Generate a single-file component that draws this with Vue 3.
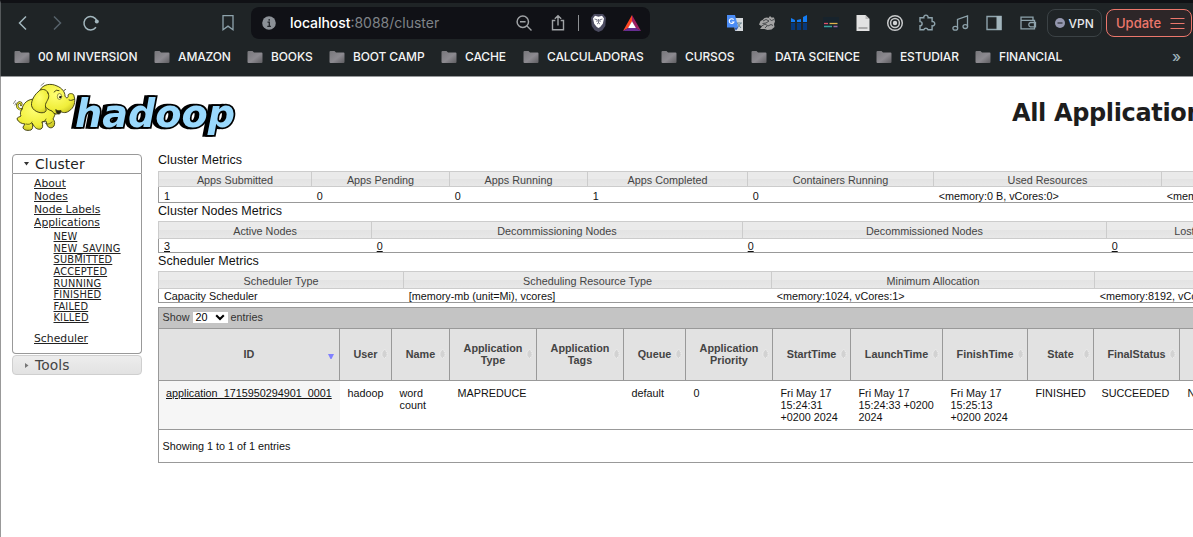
<script setup>
const bookmarks = [
  { name: '00 MI INVERSION', w: 140 },
  { name: 'AMAZON', w: 93 },
  { name: 'BOOKS', w: 82 },
  { name: 'BOOT CAMP', w: 112 },
  { name: 'CACHE', w: 82 },
  { name: 'CALCULADORAS', w: 138 },
  { name: 'CURSOS', w: 90 },
  { name: 'DATA SCIENCE', w: 125 },
  { name: 'ESTUDIAR', w: 99 },
  { name: 'FINANCIAL', w: 100 },
]
const links = ['About', 'Nodes', 'Node Labels', 'Applications']
const states = ['NEW', 'NEW_SAVING', 'SUBMITTED', 'ACCEPTED', 'RUNNING', 'FINISHED', 'FAILED', 'KILLED']
const metrics = [
  {
    title: 'Cluster Metrics',
    cls: 'm-cluster',
    heads: ['Apps Submitted', 'Apps Pending', 'Apps Running', 'Apps Completed', 'Containers Running', 'Used Resources', ''],
    values: ['1', '0', '0', '1', '0', '<memory:0 B, vCores:0>', '<memory:18 GB'],
  },
  {
    title: 'Cluster Nodes Metrics',
    cls: 'm-nodes',
    linked: true,
    heads: ['Active Nodes', 'Decommissioning Nodes', 'Decommissioned Nodes', 'Lost Nodes'],
    values: ['3', '0', '0', '0'],
  },
  {
    title: 'Scheduler Metrics',
    cls: 'm-sched',
    heads: ['Scheduler Type', 'Scheduling Resource Type', 'Minimum Allocation', ''],
    values: ['Capacity Scheduler', '[memory-mb (unit=Mi), vcores]', '<memory:1024, vCores:1>', '<memory:8192, vCores:4>'],
  },
]
const columns = [
  { head: ['ID'], cell: ['application_1715950294901_0001'] },
  { head: ['User'], cell: ['hadoop'] },
  { head: ['Name'], cell: ['word', 'count'] },
  { head: ['Application', 'Type'], cell: ['MAPREDUCE'] },
  { head: ['Application', 'Tags'], cell: [] },
  { head: ['Queue'], cell: ['default'] },
  { head: ['Application', 'Priority'], cell: ['0'] },
  { head: ['StartTime'], cell: ['Fri May 17', '15:24:31', '+0200 2024'] },
  { head: ['LaunchTime'], cell: ['Fri May 17', '15:24:33 +0200', '2024'] },
  { head: ['FinishTime'], cell: ['Fri May 17', '15:25:13', '+0200 2024'] },
  { head: ['State'], cell: ['FINISHED'] },
  { head: ['FinalStatus'], cell: ['SUCCEEDED'] },
  { head: [], cell: ['N/A'] },
]
</script>

<template>
  <div class="window">
    <header class="chrome">
      <div class="toolbar">
        <svg class="i" width="20" height="20" viewBox="0 0 20 20"><path d="M13 3.500 6.500 10l6.500 6.500" stroke="#a3b7be" /></svg>
        <svg class="i" width="20" height="20" viewBox="0 0 20 20"><path d="m7 3.500 6.500 6.500L7 16.500" stroke="#56616a" /></svg>
        <svg class="i" width="20" height="20" viewBox="0 0 20 20"><path d="M15 14.300A6.700 6.700 0 1 1 16 8" stroke="#a3b7be" /><circle cx="15.800" cy="8.600" r="2" fill="#a3b7be" /></svg>
        <svg class="i c5" width="20" height="20" viewBox="0 0 20 20"><path d="M5 2.700h10v14l-5-3.600-5 3.600z" stroke="#8ea3ac" stroke-width="1.300" /></svg>
        <div class="address">
          <svg class="info" width="14" height="14" viewBox="0 0 14 14"><circle cx="7" cy="7" r="6.800" fill="#8c9197" /><path d="M5.500 6.200H7.300V10.300M5.300 10.300h3.600M7.200 3v1.700" stroke="#22252a" stroke-width="1.300" fill="none" /></svg>
          <span class="url"><b>localhost</b>:8088/cluster</span>
          <svg class="i zoom" width="18" height="18" viewBox="0 0 18 18"><circle cx="7.800" cy="7.800" r="5.700" stroke="#a0a3a6" /><path d="m12 12 4.500 4.500M5 7.800h5.600" stroke="#a0a3a6" stroke-width="1.400" /></svg>
          <svg class="i share" width="18" height="18" viewBox="0 0 18 18"><path d="M6.300 6.500H3.500v9.300h11V6.500h-2.800M9 11.500V1.800M5.800 4.800 9 1.700l3.200 3.100" stroke="#a0a3a6" stroke-width="1.400" /></svg>
          <span class="sep"></span>
          <svg class="shield" width="17" height="20" viewBox="0 0 17 20"><path d="M4 1h9l3 3.500-.7 8.500-3 4.200L8.500 19l-3.800-1.800-3-4.200L1 4.500z" fill="#4b4b60" /><path d="m5 2.800 3.500 1 3.500-1 2 2.800-1.200 5.200-2.600 3.300-1.700 1-1.700-1-2.600-3.300L3 5.600z" fill="#fff" /><path d="m4.500 6 2.800.8L6.800 9m5.700-3-2.800.8.500 2.200M7 11l1.500-1 1.500 1M8.500 6v4" stroke="#5b5b6d" stroke-width=".8" fill="none" /></svg>
          <svg class="bat" width="18" height="17" viewBox="0 0 18 17"><path d="M9 0 0 16l5.400-3L9 6.500z" fill="#ff4724" /><path d="m9 0 9 16-5.400-3L9 6.500z" fill="#9e1f63" /><path d="M0 16h18l-5.400-3.200H5.400z" fill="#662d91" /><path d="m9 6.200 3.900 6.800H5.100z" fill="#fff" /></svg>
        </div>
        <svg class="c9" width="18" height="18" viewBox="0 0 18 18"><path d="M7 4h10v13H9z" fill="#d5d9dc" /><path d="m11 9 4 5m0-5-4 5m-.5-5h5.500" stroke="#6f8992" fill="none" /><path d="M1 1h8l3.300 12.500H1z" fill="#4b8cf5" /><path d="m8.500 13.500 3.800 0-2.500 3.200z" fill="#2b5bb8" /><path d="M7.600 5.700A2.400 2.400 0 1 0 7.900 8H5.600" stroke="#fff" stroke-width="1.100" fill="none" /></svg>
        <svg width="18" height="18" viewBox="0 0 18 18"><path d="M1 10.500 2.500 7l2-1 2-2 2.500-.5 1.500.5 1.500-2 1.500 1.500 2.500 0 .5 2 .5 2-1 2.500.5 3-3 2.500-4 .5-3-1H2l2-2.500z" fill="#a4a4a4" /><path d="m5 7 3-1.500 3 1.500-3 2-3.500.5m7-4.500 2 1.500 2.500-1M3 12.500l4-2.500 3 2 3-1.500 2 1M7 14l2-2" stroke="#303437" stroke-width=".8" fill="none" /></svg>
        <svg width="18" height="18" viewBox="0 0 18 18"><path d="M1 4v4h4V6zm6 2v2h4V5zm6-3v5h4V1z" fill="#147df5" /><path d="M1 9h4v7H1zm6 0h4v7H7zm6 0h4v7h-4z" fill="#07387a" /></svg>
        <svg width="18" height="18" viewBox="0 0 18 18"><path d="M1 3h16v12H1z" fill="#17232c" /><path d="M2 9.500h4" stroke="#e0526a" stroke-width="1.300" /><path d="M7.500 9.500h8" stroke="#e0b34b" stroke-width="1.300" /><path d="M2 12.500h8" stroke="#39a29c" stroke-width="1.500" /><path d="M11.500 12.500h4" stroke="#9c6aa3" stroke-width="1.500" /></svg>
        <svg width="18" height="18" viewBox="0 0 18 18"><path d="M2.500 1h9l4 4v12h-13z" fill="#e2e2e2" /><path d="M11.500 1v4h4z" fill="#b9b9b9" /><path d="M4.500 13h9v2h-9z" fill="#aaa" /></svg>
        <svg class="i" width="18" height="18" viewBox="0 0 18 18"><g stroke="#c7c9ca" stroke-width="1.500"><circle cx="9" cy="9" r="7.300" /><circle cx="9" cy="9" r="4.400" /></g><circle cx="9" cy="9" r="2.200" fill="#d0d2d3" /></svg>
        <svg class="i" width="18" height="18" viewBox="0 0 18 18"><path d="M2 3.800h3.800a2.200 2.200 0 1 1 4.300 0h4v3.700a2.200 2.200 0 1 1 0 4.300v4H10a2.200 2.200 0 0 0-4.200 0H2v-4a2.100 2.100 0 0 0 0-4.200z" stroke="#8ea3ac" stroke-width="1.400" /></svg>
        <svg class="i" width="18" height="18" viewBox="0 0 18 18"><path d="M6.500 14V5.500l10-3.500v10.500" stroke="#8ea3ac" stroke-width="1.300" /><ellipse cx="4.300" cy="14.300" rx="2.400" ry="1.900" stroke="#8ea3ac" stroke-width="1.300" /><ellipse cx="14.300" cy="12.600" rx="2.300" ry="1.900" stroke="#8ea3ac" stroke-width="1.300" /></svg>
        <svg class="i" width="18" height="18" viewBox="0 0 18 18"><path d="M2 2.500h14v13H2z" stroke="#8ea3ac" stroke-width="1.400" /><path d="M11.500 2h5v14h-5z" fill="#a2b5bc" /></svg>
        <svg class="i" width="18" height="18" viewBox="0 0 18 18"><path d="M2 3.500v11.300h13.500V6.300H2V3.200h12v3M16.500 8.500h-5a2.200 2.200 0 0 0 0 4.300h5z" stroke="#8ea3ac" stroke-width="1.300" /></svg>
        <div class="vpn"><svg class="dot" width="10" height="10" viewBox="0 0 10 10"><circle cx="5" cy="5" r="5" fill="#9497ae" /><path d="M2.500 5h5" stroke="#2a2e35" stroke-width="1.200" /></svg>VPN</div>
        <div class="update">Update<svg class="i" width="15" height="14" viewBox="0 0 15 14"><path d="M.5 2.500h14m-14 5h14m-14 5h14" stroke="#ec776c" stroke-width="1" /></svg></div>
      </div>
      <nav class="bookmarks">
        <div v-for="b in bookmarks" :key="b.name" class="bookmark" :style="{ width: b.w + 'px' }">
          <svg width="16" height="13" viewBox="0 0 16 13"><defs><linearGradient id="fold" x1="0" y1="0" x2="1" y2="1"><stop offset="0" stop-color="#77777b" /><stop offset=".55" stop-color="#8c8a90" /><stop offset="1" stop-color="#5e5d61" /></linearGradient></defs><path d="M.5 1Q.5 0 1.500 0h4l1.500 1.500h7.500q1 0 1 1v8.500q0 1-1 1h-13q-1 0-1-1z" fill="url(#fold)" /></svg>
          <span>{{ b.name }}</span>
        </div>
        <span class="more">»</span>
      </nav>
    </header>

    <main class="page">
      <div class="banner">
        <svg class="logo" width="228" height="62" viewBox="0 0 228 62" role="img">
          <defs>
            <radialGradient id="skin" cx=".45" cy=".35" r=".75"><stop offset="0" stop-color="#ffff72" /><stop offset=".65" stop-color="#f0ee3a" /><stop offset="1" stop-color="#bdb820" /></radialGradient>
          </defs>
          <text class="word" x="63" y="49" textLength="160" lengthAdjust="spacingAndGlyphs">hadoop</text>
          <g stroke="#38370f" stroke-width=".9" stroke-linejoin="round" stroke-linecap="round">
            <path d="M10.500 31.500C6 32 4 28 6 25.500c2-2 4-.5 3 1.500" stroke="#474614" stroke-width="2.400" fill="none" />
            <path d="M10.500 31.500C6 32 4 28 6 25.500c2-2 4-.5 3 1.500" stroke="#e8e63a" stroke-width="1.100" fill="none" />
            <path d="M10 31C11 25 16 21 23 21L44 33C43 37 42 39 41 41C43 43 43 46 42 48C40 51 36 50 35 47L34 43 30 44C31 47 31 50 29 51C26 52 23 50 22 48L20 45C21 48 21 51 19 52C15 53 11 52 11 49L13 46C10 46 6 44 5 41C5 39 8 39 9 38C8 36 8 34 10 31Z" fill="url(#skin)" />
            <path d="M28 12C31 6 39 5 45 8C50 10 53 14 53 18C54 21 57 20 56 17C57 15 62 15 62 18C64 24 62 30 57 33C53 36 49 34 48 33C47 37 42 37 40 33C36 32 33 29 31 26Z" fill="url(#skin)" />
            <path d="M36 15C35 11 29 10 26 14C22 17 18 25 20 29C22 34 30 36 33 34C36 32 32 29 34 25C36 21 38 19 36 15Z" fill="url(#skin)" />
            <path d="M14 46c3 1 5 0 6-2m10 0c2 0 3-1 4-3m-1 4c2 2 5 1 7-1" fill="none" stroke-width=".7" />
            <path d="M44 32c2 1 4 1 5 .5 0 2.500-1 3.500-2.500 3.500S44 34 44 32z" fill="#292816" />
            <ellipse cx="47.500" cy="18.500" rx="2.200" ry="3" fill="#fffe9d" stroke-width=".5" /><circle cx="48.200" cy="19.200" r="1.100" fill="#111" stroke="none" />
            <path d="M42 14q2-3 5-1.500M52 12.500l1.500-1M57 22c2 1 4 0 5.500-1" stroke-width=".9" fill="none" />
            <path d="M29 7.500l3-2.500M1.500 25.500l2-3M3 27l1-2" stroke="#555" stroke-width=".7" fill="none" />
          </g>
        </svg>
        <h1>All Applications</h1>
      </div>

      <div class="content">
        <aside>
          <div class="acc-head open"><svg width="5" height="4" viewBox="0 0 5 4"><path d="M0 0h5L2.500 3.500z" fill="#333" /></svg>Cluster</div>
          <div class="acc-body">
            <a v-for="l in links" :key="l" class="link">{{ l }}</a>
            <div class="states"><a v-for="s in states" :key="s">{{ s }}</a></div>
            <a class="link">Scheduler</a>
          </div>
          <div class="acc-head shut"><svg width="5" height="5" viewBox="0 0 5 5"><path d="M1 0v5l3.500-2.500z" fill="#777" /></svg>Tools</div>
        </aside>

        <section class="tables">
          <div v-for="m in metrics" :key="m.title" class="metric" :class="m.cls">
            <div class="title">{{ m.title }}</div>
            <div class="row heads"><div v-for="(h, i) in m.heads" :key="i"><span>{{ h }}</span></div></div>
            <div class="row values"><div v-for="(v, i) in m.values" :key="i"><span :class="{ linked: m.linked }">{{ v }}</span></div></div>
          </div>

          <div class="apps">
            <div class="bar">Show <span class="select">20<svg width="10" height="7" viewBox="0 0 10 7"><path d="m1.200 1.300 3.800 3.700 3.800-3.700" stroke="#000" stroke-width="2.100" fill="none" /></svg></span> entries</div>
            <div class="grid thead">
              <div v-for="(c, i) in columns" :key="i" class="th">
                <span><template v-for="(t, k) in c.head" :key="k"><br v-if="k">{{ t }}</template></span>
                <svg v-if="i === 0" class="sort sorted" width="6" height="5" viewBox="0 0 6 5"><path d="M0 0h6L3.500 5h-1z" fill="#8080ff" /></svg>
                <svg v-else-if="c.head.length" class="sort" width="7" height="12" viewBox="0 0 7 12"><path d="M1 4.500 3.500 1 6 4.500v3L3.500 11 1 7.500z" fill="#d2d2d2" stroke="#eee" stroke-width="1" stroke-dasharray="1.500 .7" /></svg>
              </div>
            </div>
            <div class="grid tbody">
              <div v-for="(c, i) in columns" :key="i" class="td">
                <div v-for="t in c.cell" :key="t">{{ t }}</div>
              </div>
            </div>
            <div class="foot">Showing 1 to 1 of 1 entries</div>
          </div>
        </section>
      </div>
    </main>
  </div>
</template>

<style>
body { margin: 0; overflow: hidden; background: #fff; }
</style>

<style scoped>
* { box-sizing: border-box; }
.window { width: 1193px; height: 537px; overflow: hidden; background: #fff; font-family: "Liberation Sans", Arial, sans-serif; }
.chrome { height: 77px; background: #1f2426; border-top: 3px solid #101115; border-bottom: 1px solid #96989a; border-left: 1px solid #55595b; font-family: Inter, sans-serif; }
.toolbar { height: 40px; display: grid; padding-left: 5px; align-items: center; justify-items: center; grid-template-columns: 34px 34px 34px 104px 32px 7px 399px 69px repeat(7, 32px) 34px 34px 34px 1px 56px 4px 86px; }
.i { fill: none; stroke-width: 1.5; }
.c5 { grid-column: 5; }
.address { grid-column: 7; }
.c9 { grid-column: 9; }
.vpn { grid-column: 20; }
.update { grid-column: 22; }
.address { width: 399px; height: 32px; border-radius: 8px; background: #101116; display: flex; align-items: center; padding-left: 11px; }
.url { margin-left: 14px; margin-top: -2px; width: 225px; font-size: 14px; color: #7f8388; white-space: nowrap; }
.url b { font-weight: 500; color: #fff; letter-spacing: -.05px; }
.share { margin-left: 16px; }
.sep { width: 1px; height: 16px; background: #8d9093; margin-left: 11px; }
.shield { margin-left: 11px; }
.bat { margin-left: 16px; }
.vpn { width: 55px; height: 28px; border: 1px solid #3b4245; border-radius: 8px; display: flex; align-items: center; padding-left: 7px; font-size: 12px; font-weight: 500; color: #e8eaeb; }
.dot { margin-right: 4px; }
.update { width: 86px; height: 28px; border: 1px solid #ec776c; border-radius: 8px; background: #2d2628; color: #ec776c; display: flex; align-items: center; justify-content: space-between; padding: 0 6px 0 9px; font-size: 13px; font-weight: 500; }
.bookmarks { display: flex; align-items: center; height: 27px; padding-left: 13px; font-size: 12px; font-weight: 500; letter-spacing: -.13px; color: #f3f4f4; }
.bookmark { display: flex; align-items: center; flex: none; white-space: nowrap; }
.bookmark svg { margin-top: 1px; }
.bookmark span { margin-left: 8px; }
.more { margin-left: 97px; color: #9cafb7; font-size: 15px; line-height: 20px; }

.page { height: 460px; border-left: 1px solid #999; }
.banner { display: flex; height: 77px; }
.logo { margin-left: 11px; margin-top: 1px; flex: none; overflow: visible; }
.word { font: italic bold 39px "DejaVu Sans", sans-serif; fill: #99d8fc; stroke: #000; stroke-width: 3.6px; stroke-linejoin: miter; paint-order: stroke; filter: drop-shadow(-3px .5px 0 #000); }
h1 { margin: 21px 0 0 772px; font: bold 24px/30px "DejaVu Sans", Verdana, sans-serif; letter-spacing: -.35px; white-space: nowrap; color: #1d1d1d; }
.content { display: flex; }
aside { width: 130px; margin-left: 11px; flex: none; font-family: "DejaVu Sans", Verdana, sans-serif; color: #222; }
.acc-head { height: 20px; border: 1px solid #cfcfcf; border-radius: 4px; background: linear-gradient(#ededed, #e2e2e2); font-size: 13.8px; letter-spacing: .1px; line-height: 19px; display: flex; align-items: center; padding-left: 11px; }
.acc-head svg { width: 5px; margin-right: 6px; }
.open { background: #fff; border-color: #999; border-radius: 4px 4px 0 0; }
.shut { margin-top: 1px; color: #444; }
.acc-body { height: 180px; border: 1px solid #999; border-top: 0; border-radius: 0 0 4px 4px; padding: 3px 0 0 21px; }
.acc-body a { display: block; width: max-content; text-decoration: underline; }
.link { font-size: 10.8px; line-height: 13px; }
.states { padding: 2px 0 8px 19.5px; font-size: 9.8px; letter-spacing: .2px; line-height: 11.62px; }

.tables { margin-left: 16px; width: 1400px; flex: none; font-size: 10.8px; color: #111; }
.title { font-size: 12.5px; line-height: 14px; height: 17px; letter-spacing: .05px; }
.m-cluster .title { line-height: 13px; }
.row { display: grid; white-space: nowrap; border-left: 1px solid #999; grid-auto-rows: 100%; }
.heads { height: 16px; border-top: 1px solid #ccc; border-left-color: #ccc; border-bottom: 1px solid #ccc; background: linear-gradient(#eaeaea 50%, #e3e3e3 51%, #e8e8e8); color: #444; text-align: center; line-height: 17px; }
.heads div + div { border-left: 1px solid #ccc; }
.values { height: 16px; border-bottom: 1px solid #999; line-height: 18px; }
.values div { padding-left: 5px; }
.values div + div { padding-left: 5.7px; }
.linked { text-decoration: underline; }
.m-cluster { height: 50px; }
.m-cluster .row { grid-template-columns: 152px 138px 138px 160px 186px 228px 300px; }
.m-nodes { height: 50px; }
.m-nodes .row { grid-template-columns: 212px 371px 364px 190px 265px; }
.m-sched .row { grid-template-columns: 244px 368px 323px 400px; }
.m-nodes .heads, .m-sched .heads { height: 18px; line-height: 19px; }
.m-nodes .values { height: 14px; line-height: 14px; }
.m-sched .values { height: 14px; line-height: 15px; }
.m-sched { height: 53px; }
.apps { border: 1px solid #999; }
.bar { height: 20px; background: #c4c4c4; display: flex; align-items: center; padding: 0 0 2px 3.5px; color: #333; }
.select { display: flex; align-items: center; justify-content: space-between; width: 35px; height: 11px; background: #fff; margin: 0 3px; padding: 0 3px; color: #000; }
.grid { display: grid; grid-template-columns: 181px 52px 58px 87px 87px 62px 87px 78px 92px 85px 66px 86px 250px; }
.thead { height: 53px; border-top: 1px solid #999; border-bottom: 1px solid #999; background: #e2e2e2; color: #444; font-weight: bold; line-height: 12px; text-align: center; }
.th { position: relative; display: flex; align-items: center; justify-content: center; border-right: 1px solid #999; padding-bottom: 2px; }
.sort { position: absolute; right: 3px; top: 19px; }
.sorted { right: 5px; top: 25px; }
.tbody { height: 49px; border-bottom: 1px solid #999; line-height: 12px; }
.td { padding: 6px 0 0 7.5px; white-space: nowrap; }
.td:first-child { background: #f6f6f6; padding-left: 7px; text-decoration: underline; }
.foot { height: 32px; line-height: 32px; padding-left: 3.5px; }
</style>
